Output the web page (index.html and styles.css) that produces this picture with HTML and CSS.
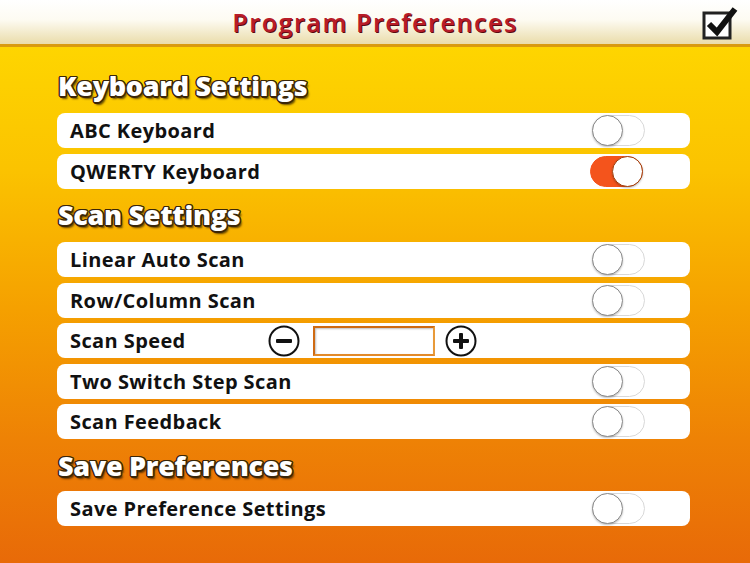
FILE: index.html
```html
<!DOCTYPE html>
<html lang="en">
<head>
  <meta charset="UTF-8" />
  <meta name="viewport" content="width=device-width, initial-scale=1.0"/>
  <title>Program Preferences</title>
  <link rel="stylesheet" href="styles.css">
</head>
<body>
  <header class="top-bar">
    <h1>Program Preferences</h1>
    <button class="done-btn" aria-label="Done">
      <svg width="40" height="36" viewBox="0 0 40 36">
        <rect x="4" y="8" width="26" height="25" fill="#fff" stroke="#222" stroke-width="3"/>
        <path d="M9 19 L17 27 L35 4" fill="none" stroke="#111" stroke-width="6" stroke-linejoin="miter" stroke-linecap="butt"/>
      </svg>
    </button>
  </header>

  <main class="settings">
    <h2>Keyboard Settings</h2>
    <div class="row"><span>ABC Keyboard</span><span class="switch"></span></div>
    <div class="row"><span>QWERTY Keyboard</span><span class="switch on"></span></div>

    <h2>Scan Settings</h2>
    <div class="row"><span>Linear Auto Scan</span><span class="switch"></span></div>
    <div class="row"><span>Row/Column Scan</span><span class="switch"></span></div>
    <div class="row speed-row">
      <span class="label">Scan Speed</span>
      <div class="stepper">
        <span class="step-btn">
          <svg width="32" height="32" viewBox="0 0 32 32">
            <circle cx="16" cy="16" r="14.5" fill="#fff" stroke="#111" stroke-width="2"/>
            <rect x="8" y="14" width="16" height="4" rx="1" fill="#111"/>
          </svg>
        </span>
        <span class="speed-box"></span>
        <span class="step-btn">
          <svg width="32" height="32" viewBox="0 0 32 32">
            <circle cx="16" cy="16" r="14.5" fill="#fff" stroke="#111" stroke-width="2"/>
            <rect x="8" y="14" width="16" height="4" rx="1" fill="#111"/>
            <rect x="14" y="8" width="4" height="16" rx="1" fill="#111"/>
          </svg>
        </span>
      </div>
    </div>
    <div class="row"><span>Two Switch Step Scan</span><span class="switch"></span></div>
    <div class="row"><span>Scan Feedback</span><span class="switch"></span></div>

    <h2>Save Preferences</h2>
    <div class="row"><span>Save Preference Settings</span><span class="switch"></span></div>
  </main>
</body>
</html>
```

FILE: styles.css
```css
html, body {
  height: 100%;
}

body {
  margin: 0;
  font-family: "Open Sans", Arial, sans-serif;
  background: linear-gradient(to bottom, #ffdc00 0%, #fbc300 30%, #f5a000 55%, #ee8205 78%, #e86a08 100%);
  overflow: hidden;
}

.top-bar {
  height: 44px;
  border-bottom: 3px solid #d99a10;
  background: linear-gradient(to bottom, #ffffff 0%, #fdfbf2 45%, #eadcaa 100%);
  display: flex;
  align-items: center;
  justify-content: center;
  position: relative;
}

.top-bar h1 {
  margin: 0;
  font-size: 25px;
  font-weight: 600;
  letter-spacing: 1.6px;
  color: #b81c28;
  text-shadow: 1px 1px 0 #5a0a10;
}

.done-btn {
  position: absolute;
  right: 10px;
  top: 5px;
  border: 0;
  padding: 0;
  background: none;
}

.settings {
  padding: 0 60px 0 57px;
}

h2 {
  margin: 0;
  padding: 22px 0 10px 1px;
  height: 34px;
  line-height: 34px;
  font-size: 27px;
  font-weight: 800;
  letter-spacing: -0.3px;
  color: #fff;
  text-shadow:
    -1px -1px 0 #3b2608, 1px -1px 0 #3b2608, -1px 1px 0 #3b2608, 1px 1px 0 #3b2608,
    0 -1.5px 0 #3b2608, 0 1.5px 0 #3b2608, -1.5px 0 0 #3b2608, 1.5px 0 0 #3b2608,
    2px 3px 2px rgba(40, 20, 0, 0.7);
}

h2 ~ h2 {
  padding-top: 4px;
}

h2:last-of-type {
  padding-bottom: 8px;
}

.row {
  height: 35px;
  margin-bottom: 5.5px;
  background: #fff;
  border-radius: 8px;
  display: flex;
  align-items: center;
  justify-content: space-between;
  padding: 0 45px 0 13px;
  font-size: 20px;
  font-weight: 700;
  letter-spacing: 0.4px;
  color: #111;
}

.switch {
  width: 53px;
  height: 31px;
  border-radius: 16px;
  border: 1px solid #d8d8d8;
  box-sizing: border-box;
  position: relative;
  background: #fff;
}

.switch::after {
  content: "";
  position: absolute;
  left: -1px;
  top: -1px;
  width: 31px;
  height: 31px;
  border-radius: 50%;
  box-sizing: border-box;
  border: 1.5px solid #8a8a8a;
  background: #fff;
  box-shadow: 0 1px 2px rgba(0, 0, 0, 0.25);
}

.switch.on {
  background: #f4541c;
  border-color: #f4541c;
  margin-right: 2px;
}

.switch.on::after {
  left: auto;
  right: -1px;
  border-color: #a4400e;
}

.speed-row {
  justify-content: flex-start;
}

.speed-row .label {
  width: 198px;
}

.stepper {
  display: flex;
  align-items: center;
}

.step-btn {
  display: flex;
}

.speed-box {
  width: 122px;
  height: 30px;
  box-sizing: border-box;
  border: 2px solid #cf6a12;
  border-right-color: #e89a3a;
  border-bottom-color: #e28a2a;
  background: #fff;
  box-shadow: inset 1px 1px 2px rgba(0, 0, 0, 0.25);
  margin: 0 10px 0 13px;
}
```
